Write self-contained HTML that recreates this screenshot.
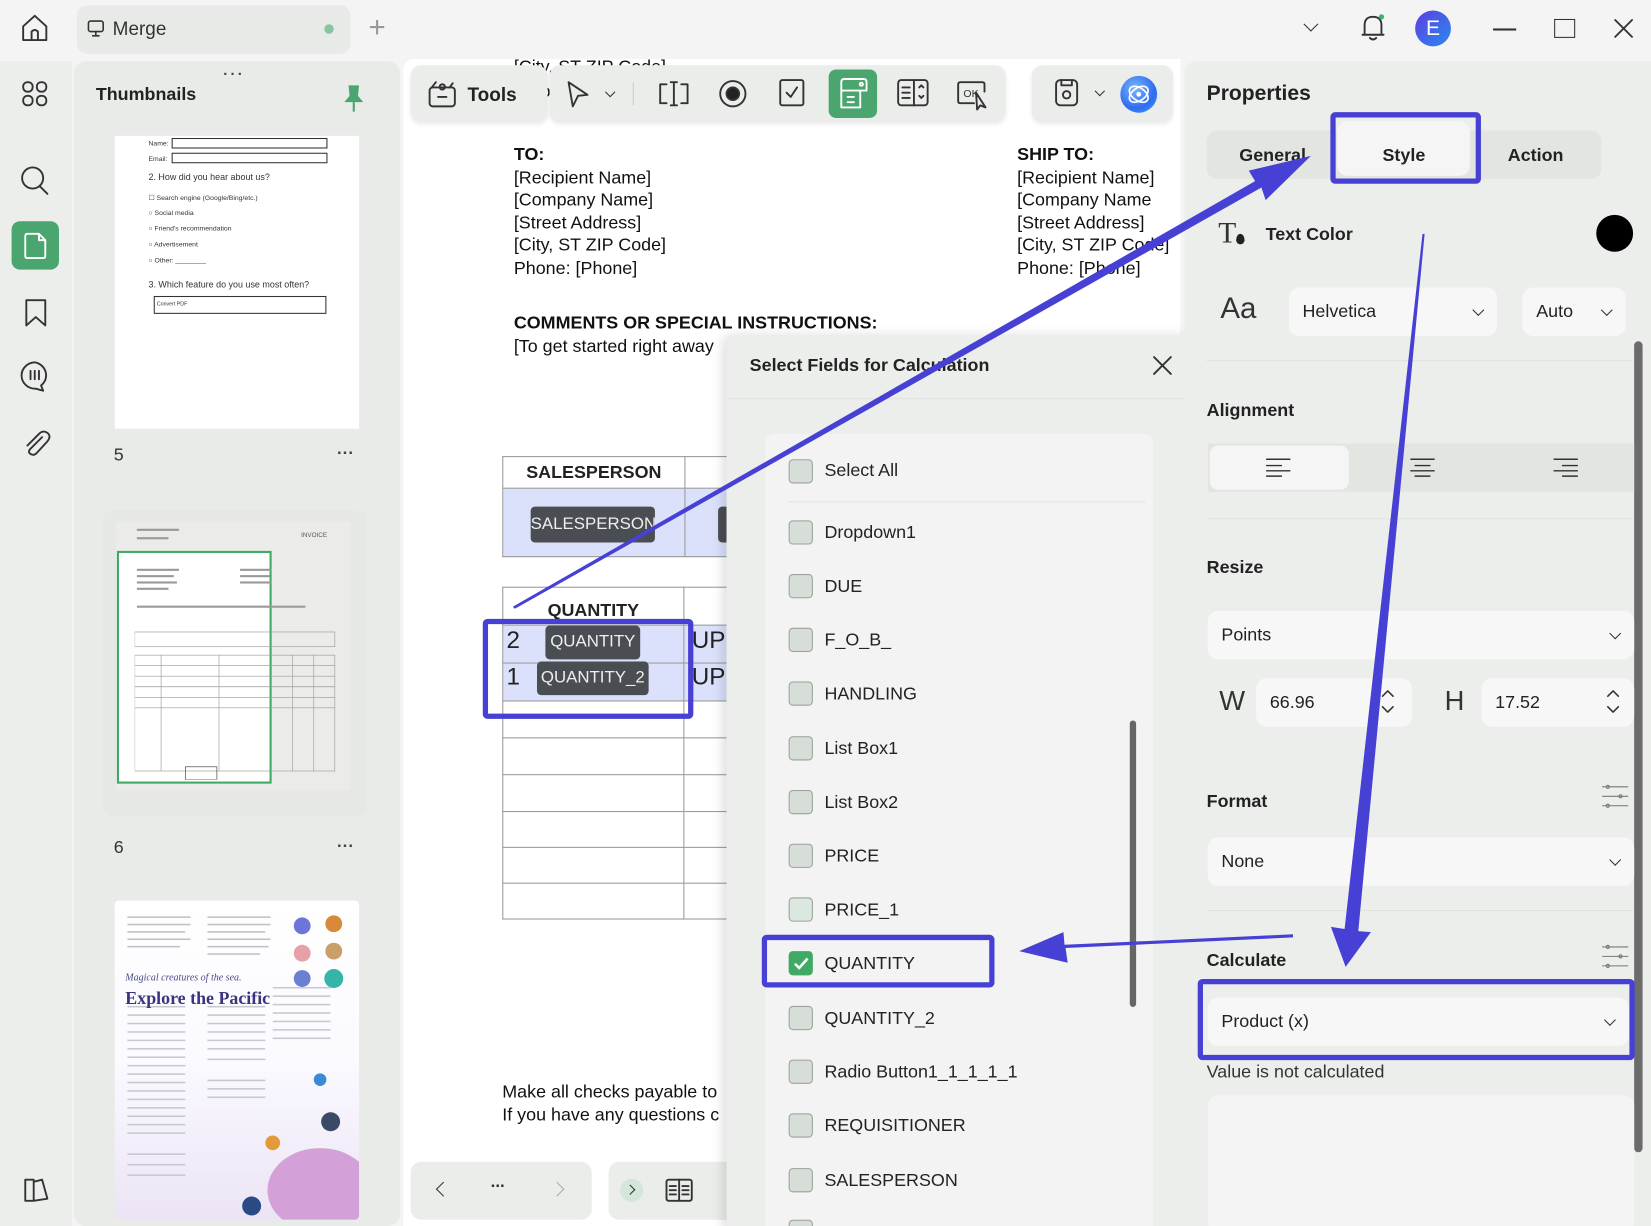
<!DOCTYPE html>
<html><head><meta charset="utf-8">
<style>
*{box-sizing:border-box;margin:0;padding:0}
html,body{width:1651px;height:1226px;overflow:hidden;background:#f3f4f3}
body{font-family:"Liberation Sans",sans-serif;color:#222}
#s{position:absolute;left:0;top:0;width:1568px;height:1164px;transform:scale(1.05293,1.0533);transform-origin:0 0;background:#f3f4f3;overflow:hidden}
.a{position:absolute}
.ic{position:absolute;fill:none;stroke:#333;stroke-width:1.8;stroke-linecap:round;stroke-linejoin:round}
.cb{position:absolute;left:749px;width:23px;height:23px;border:1.6px solid #9aa29a;border-radius:4px;background:#d7ddd7}
.it{position:absolute;left:783px;font-size:17px;color:#222}
.dd{position:absolute;background:#f6f7f6;border-radius:10px;font-size:17px;color:#222;padding-left:13px;display:flex;align-items:center}
.chev{position:absolute;right:14px;top:50%;width:8px;height:8px;border-right:1.6px solid #333;border-bottom:1.6px solid #333;transform:translateY(-70%) rotate(45deg)}
.h{position:absolute;font-weight:bold;font-size:17px;color:#222}
.doc{font-size:17px;color:#111;line-height:21.6px}
td{border:1px solid #999}
</style></head><body><div id="s">

<svg class="ic" style="left:18px;top:12px" width="30" height="30" viewBox="0 0 30 30"><path d="M4 13 L15 3 L26 13 V26 H4 Z M12 26 V18 Q15 15 18 18 V26"/></svg>
<div class="a" style="left:73px;top:5px;width:260px;height:46px;background:#e8eae8;border-radius:10px"></div>
<svg class="ic" style="left:82px;top:18px;stroke-width:1.5" width="18" height="18" viewBox="0 0 18 18"><rect x="2" y="2" width="14" height="10" rx="2"/><path d="M9 12 V16 M6 16 H12"/></svg>
<div class="a" style="left:107px;top:17px;font-size:18px;color:#333">Merge</div>
<div class="a" style="left:308px;top:23px;width:9px;height:9px;border-radius:50%;background:#86c59f"></div>
<div class="a" style="left:350px;top:10px;font-size:28px;color:#999;font-weight:300">+</div>
<div class="a" style="left:1240px;top:18px;width:10px;height:10px;border-right:1.6px solid #333;border-bottom:1.6px solid #333;transform:rotate(45deg)"></div>
<svg class="ic" style="left:1290px;top:11px" width="28" height="30" viewBox="0 0 28 30"><path d="M6 22 V13 Q6 5 14 5 Q22 5 22 13 V22 H4 H24 M11 25 Q14 28 17 25"/><circle cx="22" cy="5" r="2.5" fill="#3bb36a" stroke="none"/></svg>
<div class="a" style="left:1344px;top:10px;width:34px;height:34px;border-radius:50%;background:linear-gradient(135deg,#5b3fe0,#2a8af0);color:#fff;font-size:20px;text-align:center;line-height:34px">E</div>
<div class="a" style="left:1418px;top:27px;width:22px;height:1.8px;background:#333"></div>
<div class="a" style="left:1476px;top:18px;width:20px;height:18px;border:1.8px solid #333"></div>
<svg class="ic" style="left:1532px;top:17px" width="20" height="20" viewBox="0 0 20 20"><path d="M2 2 L18 18 M18 2 L2 18"/></svg>

<div class="a" style="left:0;top:58px;width:68px;height:1106px;background:#eceeec"></div>
<svg class="ic" style="left:20px;top:76px" width="26" height="26" viewBox="0 0 26 26"><rect x="2" y="2" width="9" height="9" rx="4"/><rect x="15" y="2" width="9" height="9" rx="4"/><rect x="2" y="15" width="9" height="9" rx="4"/><rect x="15" y="15" width="9" height="9" rx="4"/></svg>
<svg class="ic" style="left:18px;top:156px" width="30" height="30" viewBox="0 0 30 30"><circle cx="13" cy="13" r="10"/><path d="M20 21 L27 28"/></svg>
<div class="a" style="left:11px;top:210px;width:45px;height:46px;background:#4aa56f;border-radius:8px"></div>
<svg class="ic" style="left:21px;top:220px;stroke:#fff" width="25" height="27" viewBox="0 0 25 27"><path d="M4 2 H16 L22 8 V23 Q22 25 20 25 H5 Q3 25 3 23 V4 Q3 2 5 2 Z M16 2 V8 H22"/></svg>
<svg class="ic" style="left:22px;top:282px" width="24" height="30" viewBox="0 0 24 30"><path d="M3 3 H21 V27 L12 19 L3 27 Z"/></svg>
<svg class="ic" style="left:17px;top:341px" width="32" height="32" viewBox="0 0 32 32"><path d="M16 3 A13 12.5 0 1 0 17 28 L24 30 L22 25 A13 12.5 0 0 0 16 3 Z M12 11 V19 M16 11 V19 M20 11 V19"/></svg>
<svg class="ic" style="left:20px;top:405px" width="28" height="30" viewBox="0 0 28 30"><path d="M20 10 L9 21 Q6 24 9 26 Q12 28 15 25 L25 14 Q29 9 25 6 Q21 3 17 7 L6 18"/></svg>
<svg class="ic" style="left:20px;top:1116px" width="28" height="28" viewBox="0 0 28 28"><path d="M4 4 H12 V24 H4 Z M12 6 L20 4 L25 22 L12 24"/></svg>

<div class="a" style="left:70px;top:58px;width:310px;height:1106px;background:#e9ebe9;border-radius:12px"></div>
<div class="a" style="left:212px;top:58px;font-size:14px;color:#444;letter-spacing:3px;font-weight:bold">...</div>
<div class="a" style="left:91px;top:80px;font-size:17px;font-weight:bold;color:#222">Thumbnails</div>
<svg class="a" style="left:325px;top:79px" width="22" height="28" viewBox="0 0 22 28"><path d="M6 2 H16 L15 12 L20 18 H2 L7 12 Z" fill="#4aa56f"/><path d="M11 18 V27" stroke="#4aa56f" stroke-width="2"/></svg>
<div class="a" style="left:109px;top:129px;width:232px;height:278px;background:#fff;font-size:6.5px;color:#333">
 <div class="a" style="left:32px;top:4px">Name:</div><div class="a" style="left:54px;top:2px;width:148px;height:10px;border:1px solid #333"></div>
 <div class="a" style="left:32px;top:19px">Email:</div><div class="a" style="left:54px;top:16px;width:148px;height:10px;border:1px solid #333"></div>
 <div class="a" style="left:32px;top:34px;font-size:8.5px">2. How did you hear about us?</div>
 <div class="a" style="left:32px;top:55px">☐ Search engine (Google/Bing/etc.)</div>
 <div class="a" style="left:32px;top:70px">○ Social media</div>
 <div class="a" style="left:32px;top:85px">○ Friend's recommendation</div>
 <div class="a" style="left:32px;top:100px">○ Advertisement</div>
 <div class="a" style="left:32px;top:115px">○ Other: ________</div>
 <div class="a" style="left:32px;top:136px;font-size:8.5px">3. Which feature do you use most often?</div>
 <div class="a" style="left:37px;top:152px;width:164px;height:17px;border:1.2px solid #333;font-size:5px;padding:4px 2px">Convert PDF</div>
</div>
<div class="a" style="left:108px;top:422px;font-size:17px;color:#333">5</div>
<div class="a" style="left:320px;top:418px;font-size:16px;color:#444;font-weight:bold;letter-spacing:1px">...</div>
<div class="a" style="left:98px;top:485px;width:250px;height:290px;background:#e6e8e6;border-radius:8px"></div>
<div class="a" style="left:110px;top:495px;width:223px;height:255px;background:#ebecea"></div>
<div class="a" style="left:111px;top:523px;width:147px;height:221px;background:#fff;border:2.5px solid #3faa64"></div>
<svg class="a" style="left:128px;top:500px" width="200" height="240" viewBox="0 0 200 240"><g stroke="#999" stroke-width="0.6" fill="none"><rect x="0" y="100" width="190" height="14"/><rect x="0" y="122" width="190" height="110"/><path d="M25 122 V232 M80 122 V232 M150 122 V232 M170 122 V232 M0 132 H190 M0 142 H190 M0 152 H190 M0 162 H190 M0 172 H190"/><rect x="48" y="228" width="30" height="12" stroke="#333"/></g><text x="158" y="10" font-size="6" fill="#555">INVOICE</text><g fill="#999"><rect x="2" y="2" width="40" height="2"/><rect x="2" y="10" width="30" height="2"/><rect x="2" y="40" width="40" height="2"/><rect x="2" y="46" width="35" height="2"/><rect x="2" y="52" width="38" height="2"/><rect x="2" y="58" width="30" height="2"/><rect x="100" y="40" width="30" height="2"/><rect x="100" y="46" width="28" height="2"/><rect x="100" y="52" width="30" height="2"/><rect x="2" y="75" width="160" height="2"/></g></svg>
<div class="a" style="left:108px;top:795px;font-size:17px;color:#333">6</div>
<div class="a" style="left:320px;top:791px;font-size:16px;color:#444;font-weight:bold;letter-spacing:1px">...</div>
<div class="a" style="left:109px;top:855px;width:232px;height:303px;background:linear-gradient(180deg,#fff 0%,#fafaff 50%,#ece4f5 100%);border-radius:4px;overflow:hidden">
 <svg class="a" style="left:0;top:0" width="232" height="303"><g fill="#c2c2c8"><rect x="12" y="15" width="60" height="1.5"/><rect x="12" y="22" width="60" height="1.5"/><rect x="12" y="29" width="55" height="1.5"/><rect x="12" y="36" width="60" height="1.5"/><rect x="12" y="43" width="50" height="1.5"/><rect x="88" y="15" width="60" height="1.5"/><rect x="88" y="22" width="60" height="1.5"/><rect x="88" y="29" width="55" height="1.5"/><rect x="88" y="36" width="60" height="1.5"/><rect x="88" y="43" width="58" height="1.5"/><rect x="88" y="50" width="50" height="1.5"/></g>
 <g fill="#c8c8d0"><rect x="12" y="100" width="55" height="1.5"/><rect x="12" y="108" width="55" height="1.5"/><rect x="12" y="116" width="55" height="1.5"/><rect x="12" y="124" width="55" height="1.5"/><rect x="12" y="132" width="55" height="1.5"/><rect x="12" y="140" width="55" height="1.5"/><rect x="12" y="148" width="55" height="1.5"/><rect x="12" y="156" width="55" height="1.5"/><rect x="12" y="164" width="55" height="1.5"/><rect x="12" y="172" width="55" height="1.5"/><rect x="12" y="180" width="55" height="1.5"/><rect x="12" y="188" width="55" height="1.5"/><rect x="12" y="196" width="55" height="1.5"/><rect x="12" y="204" width="55" height="1.5"/><rect x="12" y="212" width="55" height="1.5"/><rect x="12" y="220" width="55" height="1.5"/><rect x="12" y="240" width="55" height="1.5"/><rect x="12" y="250" width="55" height="1.5"/><rect x="12" y="260" width="55" height="1.5"/><rect x="88" y="100" width="55" height="1.5"/><rect x="88" y="108" width="55" height="1.5"/><rect x="88" y="116" width="55" height="1.5"/><rect x="88" y="124" width="55" height="1.5"/><rect x="88" y="132" width="55" height="1.5"/><rect x="88" y="140" width="55" height="1.5"/><rect x="88" y="150" width="55" height="1.5"/><rect x="88" y="170" width="55" height="1.5"/><rect x="88" y="178" width="55" height="1.5"/><rect x="88" y="186" width="55" height="1.5"/><rect x="150" y="82" width="55" height="1.5"/><rect x="150" y="90" width="55" height="1.5"/><rect x="150" y="98" width="55" height="1.5"/><rect x="150" y="106" width="55" height="1.5"/><rect x="150" y="114" width="55" height="1.5"/><rect x="150" y="122" width="55" height="1.5"/><rect x="150" y="130" width="55" height="1.5"/></g>
 <circle cx="178" cy="24" r="8" fill="#6b76d6"/><circle cx="208" cy="22" r="8" fill="#d88a3a"/><circle cx="178" cy="50" r="8" fill="#e7a0a8"/><circle cx="208" cy="48" r="8" fill="#c9a069"/><circle cx="178" cy="74" r="8" fill="#6a7fd0"/><circle cx="208" cy="74" r="9" fill="#34b5a8"/>
 <ellipse cx="195" cy="275" rx="50" ry="40" fill="#d4a0d8"/><circle cx="150" cy="230" r="7" fill="#e49a3a"/><circle cx="205" cy="210" r="9" fill="#3a4a66"/><circle cx="195" cy="170" r="6" fill="#3c8ad6"/><circle cx="130" cy="290" r="9" fill="#2a4a86"/></svg>
 <div class="a" style="left:10px;top:69px;font-family:'Liberation Serif',serif;font-style:italic;font-size:9.5px;color:#4a4a86">Magical creatures of the sea.</div>
 <div class="a" style="left:10px;top:83px;font-family:'Liberation Serif',serif;font-weight:bold;font-size:17px;color:#38357e">Explore the Pacific</div>
</div>

<div class="a" style="left:383px;top:56px;width:738px;height:1108px;background:#fff;border-radius:10px 0 0 0"></div>
<div class="a doc" style="left:488px;top:53px">[City, ST ZIP Code]</div>
<div class="a doc" style="left:488px;top:76px">Who</div>
<div class="a" style="left:390px;top:62px;width:130px;height:54px;background:#ebedeb;border-radius:10px;box-shadow:0 2px 4px rgba(0,0,0,.08)"></div>
<svg class="ic" style="left:405px;top:72px" width="30" height="32" viewBox="0 0 30 32"><rect x="3" y="11" width="24" height="18" rx="3"/><path d="M11 20 H19 M5 11 L9 6 M15 8 a2.5 2.5 0 1 0 0.1 0 M22 11 L25 7"/></svg>
<div class="a" style="left:444px;top:80px;font-size:18px;font-weight:bold;color:#222">Tools</div>
<div class="a" style="left:522px;top:62px;width:433px;height:54px;background:#ebedeb;border-radius:10px;box-shadow:0 2px 4px rgba(0,0,0,.08)"></div>
<svg class="ic" style="left:537px;top:76px" width="24" height="28" viewBox="0 0 24 28"><path d="M3 2 L21 14 L12 15 L7 25 Z"/></svg>
<div class="a" style="left:576px;top:84px;width:7px;height:7px;border-right:1.5px solid #333;border-bottom:1.5px solid #333;transform:rotate(45deg)"></div>
<div class="a" style="left:601px;top:78px;width:1px;height:22px;background:#ccc"></div>
<svg class="ic" style="left:623px;top:76px" width="34" height="26" viewBox="0 0 34 26"><path d="M10 4 H4 V22 H10 M24 4 H30 V22 H24 M17 2 V24 M14 2 H20 M14 24 H20"/></svg>
<svg class="ic" style="left:681px;top:74px" width="30" height="30" viewBox="0 0 30 30"><circle cx="15" cy="15" r="12"/><circle cx="15" cy="15" r="6" fill="#222"/></svg>
<svg class="ic" style="left:738px;top:73px" width="28" height="30" viewBox="0 0 28 30"><rect x="3" y="3" width="22" height="24" rx="2"/><path d="M9 15 L13 19 L19 10"/></svg>
<div class="a" style="left:787px;top:66px;width:46px;height:46px;background:#4aa56f;border-radius:7px"></div>
<svg class="ic" style="left:795px;top:72px;stroke:#fff" width="32" height="34" viewBox="0 0 32 34"><path d="M4 14 V30 H22 V14 Z M4 14 V6 Q4 3 7 3 H25 Q28 3 28 6 V14 H22 M10 20 H16 M10 25 H16"/><circle cx="23" cy="8" r="1.5"/></svg>
<svg class="ic" style="left:851px;top:73px" width="32" height="30" viewBox="0 0 32 30"><rect x="2" y="3" width="28" height="24" rx="3"/><path d="M17 3 V27 M6 10 H13 M6 15 H13 M6 20 H13 M22 10 L24 8 L26 10 M22 18 L24 20 L26 18"/></svg>
<svg class="ic" style="left:907px;top:73px" width="34" height="34" viewBox="0 0 34 34"><path d="M18 25 H5 Q3 25 3 23 V7 Q3 5 5 5 H26 Q28 5 28 7 V14"/><text x="8" y="19" font-size="10" stroke="none" fill="#333" font-family="Liberation Sans">OK</text><path d="M20 15 L21 31 L24 27 L29 29 Z"/></svg>
<div class="a" style="left:980px;top:62px;width:134px;height:54px;background:#ebedeb;border-radius:10px;box-shadow:0 2px 4px rgba(0,0,0,.08)"></div>
<svg class="ic" style="left:1000px;top:73px" width="26" height="30" viewBox="0 0 26 30"><rect x="3" y="3" width="20" height="24" rx="4"/><path d="M8 3 V8 H18 V3"/><circle cx="13" cy="17" r="3.5"/></svg>
<div class="a" style="left:1041px;top:83px;width:7px;height:7px;border-right:1.5px solid #333;border-bottom:1.5px solid #333;transform:rotate(45deg)"></div>
<div class="a" style="left:1064px;top:72px;width:35px;height:35px;border-radius:50%;background:radial-gradient(circle at 40% 35%,#7ab8ff,#2f6cf0 60%,#3aa8f5)"></div>
<svg class="ic" style="left:1068px;top:76px;stroke:#fff;stroke-width:1.6" width="27" height="27" viewBox="0 0 27 27"><ellipse cx="13.5" cy="13.5" rx="10" ry="6" transform="rotate(-35 13.5 13.5)"/><ellipse cx="13.5" cy="13.5" rx="10" ry="6" transform="rotate(35 13.5 13.5)"/><circle cx="13.5" cy="13.5" r="1.5" fill="#fff"/></svg>

<div class="a doc" style="left:488px;top:136px"><b>TO:</b><br>[Recipient Name]<br>[Company Name]<br>[Street Address]<br>[City, ST ZIP Code]<br>Phone: [Phone]</div>
<div class="a doc" style="left:966px;top:136px;white-space:nowrap"><b>SHIP TO:</b><br>[Recipient Name]<br>[Company Name<br>[Street Address]<br>[City, ST ZIP Code]<br>Phone: [Phone]</div>
<div class="a doc" style="left:488px;top:296px;white-space:nowrap"><b>COMMENTS OR SPECIAL INSTRUCTIONS:</b><br>[To get started right away</div>

<table class="a" style="left:477px;top:433px;border-collapse:collapse;font-size:17px">
<tr style="height:30px"><td style="width:173px;text-align:center;font-weight:bold">SALESPERSON</td><td style="width:60px"></td></tr>
<tr style="height:65px;background:#dbe0fb"><td></td><td></td></tr></table>
<div class="a" style="left:504px;top:481px;width:118px;height:34px;background:#4a4d52;border-radius:4px;color:#eee;font-size:16px;line-height:34px;text-align:center">SALESPERSON</div>
<div class="a" style="left:682px;top:481px;width:8px;height:34px;background:#4a4d52;border-radius:4px 0 0 4px"></div>
<table class="a" style="left:477px;top:557px;border-collapse:collapse;font-size:17px">
<tr style="height:36px"><td style="width:172px;text-align:center;font-weight:bold;padding-top:8px">QUANTITY</td><td style="width:60px"></td></tr>
<tr style="height:36px;background:#dbe0fb"><td></td><td></td></tr>
<tr style="height:36px;background:#dbe0fb"><td></td><td></td></tr>
<tr style="height:35px"><td></td><td></td></tr><tr style="height:35px"><td></td><td></td></tr><tr style="height:35px"><td></td><td></td></tr><tr style="height:34px"><td></td><td></td></tr><tr style="height:34px"><td></td><td></td></tr><tr style="height:34px"><td></td><td></td></tr></table>
<div class="a" style="left:481px;top:594px;font-size:23px">2</div>
<div class="a" style="left:481px;top:629px;font-size:23px">1</div>
<div class="a" style="left:518px;top:594px;width:90px;height:32px;background:#4a4d52;border-radius:4px;color:#eee;font-size:16px;line-height:32px;text-align:center">QUANTITY</div>
<div class="a" style="left:510px;top:628px;width:106px;height:32px;background:#4a4d52;border-radius:4px;color:#eee;font-size:16px;line-height:32px;text-align:center">QUANTITY_2</div>
<div class="a" style="left:657px;top:594px;font-size:23px">UPI</div>
<div class="a" style="left:657px;top:629px;font-size:23px">UPI</div>
<div class="a doc" style="left:477px;top:1026px;white-space:nowrap">Make all checks payable to<br>If you have any questions c</div>

<div class="a" style="left:390px;top:1103px;width:172px;height:55px;background:#ebedeb;border-radius:10px"></div>
<div class="a" style="left:416px;top:1124px;width:10px;height:10px;border-left:1.8px solid #333;border-bottom:1.8px solid #333;transform:rotate(45deg)"></div>
<div class="a" style="left:466px;top:1114px;font-size:16px;font-weight:bold;color:#333">...</div>
<div class="a" style="left:524px;top:1124px;width:10px;height:10px;border-right:1.8px solid #aaa;border-top:1.8px solid #aaa;transform:rotate(45deg)"></div>
<div class="a" style="left:578px;top:1103px;width:120px;height:55px;background:#ebedeb;border-radius:10px"></div>
<div class="a" style="left:589px;top:1119px;width:22px;height:22px;border-radius:50%;background:#d4e6d9"></div>
<div class="a" style="left:595px;top:1126px;width:7px;height:7px;border-right:1.5px solid #333;border-top:1.5px solid #333;transform:rotate(45deg)"></div>
<svg class="ic" style="left:631px;top:1117px" width="28" height="26" viewBox="0 0 28 26"><rect x="2" y="3" width="24" height="20" rx="2"/><path d="M14 3 V23 M5 9 H11 M5 13 H11 M5 17 H11 M17 9 H23 M17 13 H23 M17 17 H23"/></svg>

<div class="a" style="left:690px;top:318px;width:442px;height:850px;background:#eceeec;border-radius:10px 10px 0 0;box-shadow:-4px 0 10px rgba(0,0,0,.12)"></div>
<div class="a" style="left:712px;top:337px;font-size:17px;font-weight:bold;color:#222">Select Fields for Calculation</div>
<svg class="ic" style="left:1094px;top:337px" width="20" height="20" viewBox="0 0 20 20"><path d="M2 2 L18 18 M18 2 L2 18"/></svg>
<div class="a" style="left:691px;top:378px;width:440px;height:1px;background:#e0e2e0"></div>
<div class="a" style="left:727px;top:412px;width:368px;height:760px;background:#f2f3f2;border-radius:8px"></div>
<div class="a" style="left:748px;top:476px;width:340px;height:1px;background:#e3e5e3"></div>
<div class="a" style="left:1073px;top:684px;width:6px;height:272px;background:#666;border-radius:3px"></div>

<div class="cb" style="top:436px"></div><div class="it" style="top:437px">Select All</div>
<div class="cb" style="top:494px"></div><div class="it" style="top:496px">Dropdown1</div>
<div class="cb" style="top:545px"></div><div class="it" style="top:547px">DUE</div>
<div class="cb" style="top:596px"></div><div class="it" style="top:598px">F_O_B_</div>
<div class="cb" style="top:647px"></div><div class="it" style="top:649px">HANDLING</div>
<div class="cb" style="top:699px"></div><div class="it" style="top:701px">List Box1</div>
<div class="cb" style="top:750px"></div><div class="it" style="top:752px">List Box2</div>
<div class="cb" style="top:801px"></div><div class="it" style="top:803px">PRICE</div>
<div class="cb" style="top:852px;background:#dbe8df"></div><div class="it" style="top:854px">PRICE_1</div>
<div class="cb" style="top:903px;background:#3faa64;border-color:#3faa64"></div>
<svg class="a" style="left:751px;top:905px" width="20" height="20" viewBox="0 0 20 20"><path d="M4 10 L8 14 L16 5" stroke="#fff" stroke-width="2.4" fill="none"/></svg>
<div class="it" style="top:905px">QUANTITY</div>
<div class="cb" style="top:955px"></div><div class="it" style="top:957px">QUANTITY_2</div>
<div class="cb" style="top:1006px"></div><div class="it" style="top:1008px">Radio Button1_1_1_1_1</div>
<div class="cb" style="top:1057px"></div><div class="it" style="top:1059px">REQUISITIONER</div>
<div class="cb" style="top:1109px"></div><div class="it" style="top:1111px">SALESPERSON</div>
<div class="cb" style="top:1158px"></div>

<div class="a" style="left:1125px;top:58px;width:443px;height:1106px;background:#eceeec;border-radius:12px 0 0 0"></div>
<div class="a" style="left:1146px;top:78px;font-size:20px;font-weight:bold;color:#222">Properties</div>
<div class="a" style="left:1146px;top:124px;width:375px;height:46px;background:#e2e5e0;border-radius:10px"></div>
<div class="a" style="left:1270px;top:115px;width:126px;height:52px;background:#f4f5f4;border-radius:10px"></div>
<div class="a h" style="left:1177px;top:138px">General</div>
<div class="a h" style="left:1313px;top:138px">Style</div>
<div class="a h" style="left:1432px;top:138px">Action</div>
<div class="a" style="left:1157px;top:206px;font-family:'Liberation Serif',serif;font-size:28px;color:#333">T</div>
<div class="a" style="left:1174px;top:222px;width:8px;height:10px;background:#222;border-radius:50% 50% 50% 50%/60% 60% 40% 40%"></div>
<div class="a h" style="left:1202px;top:213px">Text Color</div>
<div class="a" style="left:1516px;top:204px;width:35px;height:35px;border-radius:50%;background:#000"></div>
<div class="a" style="left:1159px;top:277px;font-size:28px;color:#333">Aa</div>
<div class="dd" style="left:1224px;top:273px;width:198px;height:46px">Helvetica<span class="chev"></span></div>
<div class="dd" style="left:1446px;top:273px;width:98px;height:46px">Auto<span class="chev"></span></div>
<div class="a" style="left:1146px;top:342px;width:405px;height:1px;background:#e0e2e0"></div>
<div class="a" style="left:1552px;top:324px;width:8px;height:770px;background:#6b6b6b;border-radius:4px"></div>
<div class="a h" style="left:1146px;top:380px">Alignment</div>
<div class="a" style="left:1147px;top:421px;width:405px;height:46px;background:#e2e5e0"></div>
<div class="a" style="left:1149px;top:423px;width:132px;height:42px;background:#f4f5f4;border-radius:8px"></div>
<svg class="ic" style="left:1202px;top:434px;stroke-width:1.4" width="24" height="20" viewBox="0 0 24 20"><path d="M1 2 H23 M1 8 H15 M1 13 H23 M1 18 H15"/></svg>
<svg class="ic" style="left:1339px;top:434px;stroke-width:1.4" width="24" height="20" viewBox="0 0 24 20"><path d="M1 2 H23 M5 8 H19 M1 13 H23 M5 18 H19"/></svg>
<svg class="ic" style="left:1475px;top:434px;stroke-width:1.4" width="24" height="20" viewBox="0 0 24 20"><path d="M1 2 H23 M9 8 H23 M1 13 H23 M9 18 H23"/></svg>
<div class="a" style="left:1146px;top:492px;width:405px;height:1px;background:#e0e2e0"></div>
<div class="a h" style="left:1146px;top:529px">Resize</div>
<div class="dd" style="left:1147px;top:580px;width:405px;height:46px">Points<span class="chev"></span></div>
<div class="a" style="left:1158px;top:650px;font-size:26px;color:#333">W</div>
<div class="dd" style="left:1193px;top:644px;width:148px;height:46px">66.96</div>
<svg class="ic" style="left:1311px;top:654px;stroke-width:1.5" width="14" height="24" viewBox="0 0 14 24"><path d="M2 7 L7 2 L12 7 M2 17 L7 22 L12 17"/></svg>
<div class="a" style="left:1372px;top:650px;font-size:26px;color:#333">H</div>
<div class="dd" style="left:1407px;top:644px;width:145px;height:46px">17.52</div>
<svg class="ic" style="left:1525px;top:654px;stroke-width:1.5" width="14" height="24" viewBox="0 0 14 24"><path d="M2 7 L7 2 L12 7 M2 17 L7 22 L12 17"/></svg>
<div class="a h" style="left:1146px;top:751px">Format</div>
<svg class="ic" style="left:1521px;top:744px;stroke-width:1;stroke:#777" width="26" height="26" viewBox="0 0 26 26"><path d="M1 3 H25 M1 12 H25 M1 21 H25"/><circle cx="6" cy="3" r="1.5"/><circle cx="18" cy="12" r="1.5"/><circle cx="6" cy="21" r="1.5"/></svg>
<div class="dd" style="left:1147px;top:795px;width:405px;height:46px">None<span class="chev"></span></div>
<div class="a" style="left:1146px;top:864px;width:405px;height:1px;background:#e0e2e0"></div>
<div class="a h" style="left:1146px;top:902px">Calculate</div>
<svg class="ic" style="left:1521px;top:896px;stroke-width:1;stroke:#777" width="26" height="26" viewBox="0 0 26 26"><path d="M1 3 H25 M1 12 H25 M1 21 H25"/><circle cx="6" cy="3" r="1.5"/><circle cx="18" cy="12" r="1.5"/><circle cx="6" cy="21" r="1.5"/></svg>
<div class="dd" style="left:1147px;top:947px;width:400px;height:46px">Product (x)<span class="chev"></span></div>
<div class="a" style="left:1146px;top:1008px;font-size:17px;color:#333">Value is not calculated</div>
<div class="a" style="left:1147px;top:1040px;width:405px;height:130px;background:#f3f4f3;border-radius:10px"></div>

<svg class="a" style="left:0;top:0" width="1568" height="1164">
<g fill="none" stroke="#4740d4">
<rect x="1266" y="109" width="138" height="63" stroke-width="5" rx="2"/>
<rect x="461" y="590" width="195" height="90" stroke-width="5" rx="2"/>
<rect x="726" y="890" width="216" height="45" stroke-width="5" rx="2"/>
<rect x="1140" y="932" width="410" height="72" stroke-width="5" rx="2"/>
</g>
<g fill="#4740d4">
<polygon points="487,576 489,578 1198,178 1202,190 1245,148 1186,162 1192,172"/>
<polygon points="1351,222 1353,222 1290,884 1302,885 1278,918 1264,880 1277,882"/>
<polygon points="1228,887 1228,890 1012,900 1014,914 968,903 1010,885 1011,897"/>
</g>
</svg>

</div></body></html>
